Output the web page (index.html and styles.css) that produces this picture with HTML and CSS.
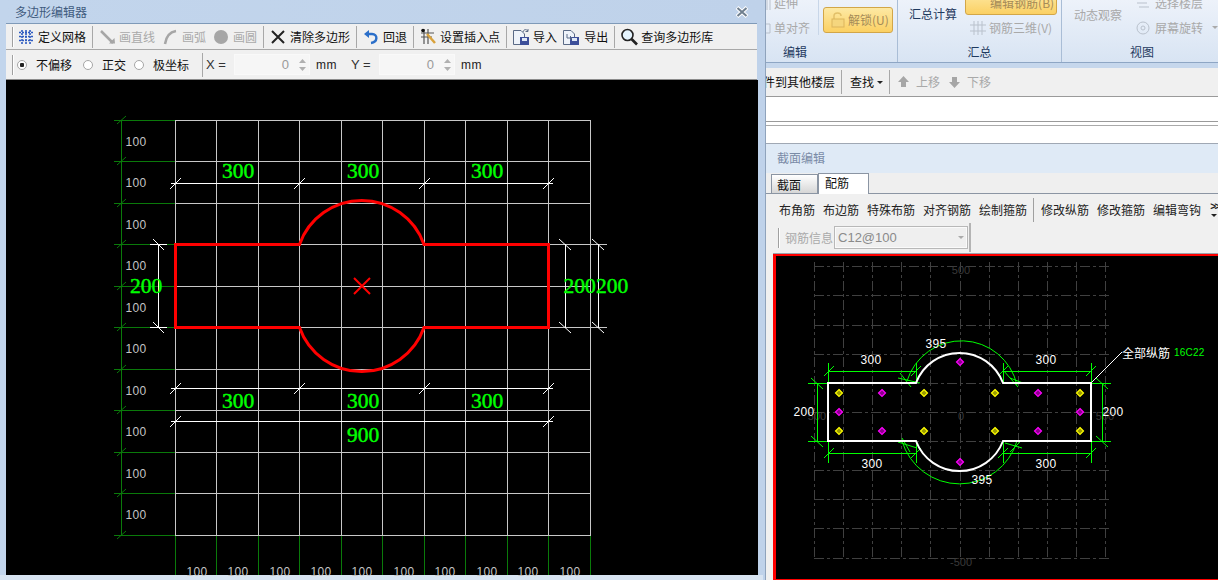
FILE: index.html
```html
<!DOCTYPE html>
<html lang="zh">
<head>
<meta charset="utf-8">
<title>多边形编辑器</title>
<link rel="stylesheet" href="styles.css">
</head>
<body>
<div class="app">
  <section class="editor">
    <header class="titlebar">
      <span class="title">多边形编辑器</span>
      <svg class="close" width="14" height="12" viewBox="0 0 14 12"><path class="close-o" d="M2 1.500 L12 10.500 M12 1.500 L2 10.500"/><path class="close-i" d="M2.500 2 L11.500 10 M11.500 2 L2.500 10"/></svg>
    </header>
    <div class="tb tb-one">
      <i class="handle"></i>
      <div class="tool first">
        <svg class="ic" width="14" height="16" viewBox="0 0 14 16"><path class="i-grid" d="M3 1V15M7 1V15M11 1V15M0 3.500H14M0 7.500H14M0 11.500H14"/></svg>
        <span>定义网格</span>
      </div>
      <i class="sep"></i>
      <div class="tool off">
        <svg class="ic" width="14" height="16" viewBox="0 0 14 16"><path class="i-off" d="M1 2 L13 14"/><path class="i-offf" d="M9 14.500 L15 14.500 L14.500 9z"/></svg>
        <span>画直线</span>
      </div>
      <div class="tool off">
        <svg class="ic" width="14" height="16" viewBox="0 0 14 16"><path class="i-off" d="M2 15 C3 8 7 3 13 2"/></svg>
        <span>画弧</span>
      </div>
      <div class="tool off">
        <svg class="ic" width="14" height="16" viewBox="0 0 14 16"><circle class="i-offf" cx="7" cy="8" r="7"/></svg>
        <span>画圆</span>
      </div>
      <i class="sep"></i>
      <div class="tool">
        <svg class="ic" width="14" height="16" viewBox="0 0 14 16"><path class="i-x" d="M1 2 L13 14 M13 2 L1 14"/></svg>
        <span>清除多边形</span>
      </div>
      <i class="sep"></i>
      <div class="tool">
        <svg class="ic" width="14" height="16" viewBox="0 0 14 16"><path class="i-undo" d="M3 5 H8 C14 5 14 13 7 14"/><path class="i-undof" d="M5 1 V9 L0 5z"/></svg>
        <span>回退</span>
      </div>
      <i class="sep"></i>
      <div class="tool flush">
        <svg class="ic" width="15" height="18" viewBox="0 0 15 18"><path class="i-dark" d="M1 5H14M1 9H12M4 1V16M8 1V16"/><path class="i-pencil" d="M7 6 L15 15"/><circle class="i-dot" cx="3" cy="2.500" r="1.800"/></svg>
        <span>设置插入点</span>
      </div>
      <i class="sep"></i>
      <div class="tool flush">
        <svg class="ic" width="15" height="18" viewBox="0 0 15 18"><path class="i-page" d="M0.500 2.500H8L11.500 6V16.500H0.500z"/><path class="i-disk" d="M7 9H16V17H7z"/><path class="i-diskl" d="M9 10H14V13H9z"/><path class="i-arrow" d="M10 4 C11 1 13 1 15 3 M15 1V3.500H12.500"/></svg>
        <span>导入</span>
      </div>
      <div class="tool near">
        <svg class="ic" width="16" height="18" viewBox="0 0 16 18"><path class="i-page" d="M0.500 2.500H8L11.500 6V16.500H0.500z"/><path class="i-disk" d="M7 9H16V17H7z"/><path class="i-diskl" d="M9 10H14V13H9z"/><path class="i-arrow" d="M4 6 L4 10 H9 M7 8 L9 10 L7 12"/></svg>
        <span>导出</span>
      </div>
      <i class="sep"></i>
      <div class="tool flush">
        <svg class="ic" width="15" height="18" viewBox="0 0 15 18"><circle class="i-lens" cx="6.500" cy="7" r="5.500"/><path class="i-handle" d="M10.500 11 L16 16.500"/></svg>
        <span>查询多边形库</span>
      </div>
    </div>
    <div class="tb tb-two">
      <i class="handle"></i>
      <label class="radio r-a"><i class="dot on"></i><span>不偏移</span></label>
      <label class="radio r-b"><i class="dot"></i><span>正交</span></label>
      <label class="radio r-c"><i class="dot"></i><span>极坐标</span></label>
      <i class="sep sep-coord"></i>
      <span class="coord">X =</span>
      <div class="num"><span>0</span><svg class="spin" width="7" height="16" viewBox="0 0 7 16"><path d="M3.500 2 L7 6 H0z M3.500 14 L7 10 H0z"/></svg></div>
      <span class="unit">mm</span>
      <span class="coord coord-y">Y =</span>
      <div class="num"><span>0</span><svg class="spin" width="7" height="16" viewBox="0 0 7 16"><path d="M3.500 2 L7 6 H0z M3.500 14 L7 10 H0z"/></svg></div>
      <span class="unit">mm</span>
    </div>
    <svg class="canvas-l" width="752" height="495" viewBox="6 80 752 495">
      <path class="g-dark crisp" d="M121.500 120V535 M114 120.500H175 M114 161.500H175 M114 203.500H175 M114 244.500H175 M114 286.500H175 M114 327.500H175 M114 369.500H175 M114 410.500H175 M114 452.500H175 M114 493.500H175 M114 535.500H175 M175.500 535V575 M216.500 535V575 M258.500 535V575 M299.500 535V575 M341.500 535V575 M382.500 535V575 M424.500 535V575 M465.500 535V575 M507.500 535V575 M548.500 535V575 M590.500 535V575"/>
      <path class="g-dark" d="M117 124L126 116 M117 165L126 157 M117 207L126 199 M117 248L126 240 M117 290L126 282 M117 331L126 323 M117 373L126 365 M117 414L126 406 M117 456L126 448 M117 497L126 489 M117 539L126 531"/>
      <path class="g-grid" d="M175.500 120V535 M216.500 120V535 M258.500 120V535 M299.500 120V535 M341.500 120V535 M382.500 120V535 M424.500 120V535 M465.500 120V535 M507.500 120V535 M548.500 120V535 M590.500 120V535 M175 120.500H591 M175 161.500H591 M175 203.500H591 M175 244.500H591 M175 286.500H591 M175 327.500H591 M175 369.500H591 M175 410.500H591 M175 452.500H591 M175 493.500H591 M175 535.500H591 M548 244.500H607 M548 327.500H607"/>
      <g class="t-100">
        <text x="136" y="142">100</text><text x="136" y="183">100</text><text x="136" y="225">100</text><text x="136" y="266">100</text><text x="136" y="308">100</text><text x="136" y="349">100</text><text x="136" y="391">100</text><text x="136" y="432">100</text><text x="136" y="474">100</text><text x="136" y="515">100</text>
        <text x="197" y="572">100</text><text x="238" y="572">100</text><text x="280" y="572">100</text><text x="321" y="572">100</text><text x="362" y="572">100</text><text x="404" y="572">100</text><text x="445" y="572">100</text><text x="487" y="572">100</text><text x="528" y="572">100</text><text x="570" y="572">100</text>
      </g>
      <path class="d-white" d="M171 183.500H553 M171 388.500H553 M171 421.500H553 M150 244.500H167 M150 327.500H167 M158.500 244V328 M565.500 244V328 M598.500 244V328"/>
      <path class="d-tick" d="M170 189L181 178 M294 189L305 178 M419 189L430 178 M543 189L554 178 M170 394L181 383 M294 394L305 383 M419 394L430 383 M543 394L554 383 M170 427L181 416 M543 427L554 416 M153 239L164 250 M153 322L164 333 M559 239L571 250 M592 239L604 250 M559 322L571 333 M592 322L604 333"/>
      <path class="poly-red" d="M175.500 244.500H299.500 A66 66 0 0 1 424 244.500 H548.500 V327.500 H424 A66 66 0 0 1 299.500 327.500 H175.500z"/>
      <path class="cross-red" d="M354 278L370 294 M370 278L354 294"/>
      <g class="t-dim">
        <text x="238" y="171">300</text><text x="363" y="171">300</text><text x="487" y="171">300</text>
        <text x="238" y="401">300</text><text x="363" y="401">300</text><text x="487" y="401">300</text>
        <text x="363" y="435">900</text>
        <text x="146" y="286">200</text><text x="579.500" y="286">200</text><text x="612" y="286">200</text>
      </g>
    </svg>
    <div class="editor-foot"></div>
  </section>

  <section class="side">
    <div class="ribbon">
      <div class="rgroup rg-edit">
        <div class="rbody">
          <div class="rcol col-edit">
            <div class="ritem off"><svg width="5" height="14" viewBox="0 0 5 14"><path class="i-rib" d="M1 1V14M4 1V14"/></svg><span>延伸</span></div>
            <div class="ritem off"><svg width="5" height="14" viewBox="0 0 5 14"><path class="i-rib" d="M0 3H4V12H0"/></svg><span>单对齐</span></div>
          </div>
          <i class="rdiv"></i>
          <div class="gold gold-lock">
            <svg width="18" height="18" viewBox="0 0 18 18"><path class="i-lock" d="M5 8V5C5 1 12 1 12 5"/><rect class="i-lockb" x="3" y="8" width="12" height="8"/></svg>
            <span>解锁(U)</span>
          </div>
        </div>
        <div class="rlabel">编辑</div>
      </div>
      <div class="rgroup rg-sum">
        <div class="rbody">
          <div class="rbig sum-calc">汇总计算</div>
          <div class="rcol col-sum">
            <div class="gold gold-edit"><span>编辑钢筋(B)</span></div>
            <div class="ritem off item-3d"><svg width="16" height="16" viewBox="0 0 16 16"><path class="i-rib" d="M4 1V15M8 1V15M12 1V15M0 5H16M0 11H16"/></svg><span>钢筋三维(V)</span></div>
          </div>
        </div>
        <div class="rlabel">汇总</div>
      </div>
      <div class="rgroup rg-view">
        <div class="rbody">
          <div class="rbig off view-orbit">动态观察</div>
          <div class="rcol col-view">
            <div class="ritem off"><svg width="14" height="14" viewBox="0 0 14 14"><path class="i-rib" d="M3 3H13M1 7H11M3 11H13"/></svg><span>选择楼层</span></div>
            <div class="ritem off"><svg width="14" height="14" viewBox="0 0 14 14"><circle class="i-rib" cx="7" cy="7" r="6"/><circle class="i-rib" cx="7" cy="7" r="2"/></svg><span>屏幕旋转</span><i class="caret caret-off"></i></div>
          </div>
        </div>
        <div class="rlabel">视图</div>
      </div>
    </div>
    <div class="band"></div>
    <div class="strip">
      <div class="clip-left"><span>构件到其他楼层</span></div>
      <i class="sep"></i>
      <div class="find"><span>查找</span><i class="caret"></i></div>
      <i class="sep"></i>
      <div class="move off"><svg width="11" height="12" viewBox="0 0 11 12"><path class="i-offf" d="M5.500 0 L11 6 H8 V11 H3 V6 H0z"/></svg><span>上移</span></div>
      <div class="move off"><svg width="11" height="12" viewBox="0 0 11 12"><path class="i-offf" d="M5.500 12 L11 6 H8 V1 H3 V6 H0z"/></svg><span>下移</span></div>
    </div>
    <div class="white-row one"></div>
    <div class="white-row two"></div>
    <div class="sec-head">截面编辑</div>
    <div class="tabs">
      <div class="tab">截面</div>
      <div class="tab active">配筋</div>
    </div>
    <div class="rebar-bar">
      <span>布角筋</span><span>布边筋</span><span>特殊布筋</span><span>对齐钢筋</span><span>绘制箍筋</span>
      <i class="sep sep-rebar"></i>
      <span>修改纵筋</span><span>修改箍筋</span><span>编辑弯钩</span>
      <div class="more"><span>&gt;&gt;</span><i class="caret"></i></div>
    </div>
    <div class="info-row">
      <div class="info-box">
        <i class="handle"></i>
        <span class="info-lab">钢筋信息</span>
        <div class="combo"><span>C12@100</span><i class="caret caret-off"></i></div>
      </div>
    </div>
    <div class="canvas-frame">
      <svg class="canvas-r" width="442" height="323" viewBox="776 256 442 323">
        <path class="grid-dash" d="M814 266H1111 M814 295H1111 M814 325H1111 M814 354H1111 M814 383H1111 M814 412H1111 M814 441H1111 M814 470H1111 M814 499H1111 M814 528H1111 M814 558H1111 M814.500 262V558 M843.500 262V558 M872.500 262V558 M901.500 262V558 M930.500 262V558 M960.500 262V558 M989.500 262V558 M1018.500 262V558 M1047.500 262V558 M1076.500 262V558 M1105.500 262V558"/>
        <g class="t-axis">
          <text x="961" y="270">500</text><text x="961" y="562">-500</text><text x="817" y="416">500</text><text x="961" y="416">0</text><text x="1105" y="416">500</text>
        </g>
        <path class="d-green" d="M828 371.500H916 M1003 371.500H1091 M828 453.500H916 M1003 453.500H1091 M828.500 363V383 M916.500 363V383 M1003.500 363V383 M1091.500 363V383 M828.500 441V463 M916.500 441V463 M1003.500 441V463 M1091.500 441V463 M808 383.500H828 M808 441.500H828 M1091 383.500H1111 M1091 441.500H1111 M817.500 383V441 M1102.500 383V441"/>
        <path class="d-green soft" d="M824 376L834 366 M911 376L921 366 M998 376L1008 366 M1086 376L1096 366 M824 458L834 448 M911 458L921 448 M998 458L1008 448 M1086 458L1096 448 M811 378L823 389 M811 436L823 447 M1096 378L1108 389 M1096 436L1108 447 M900 373L911 387 M898 378L920 383 M1003 370L1018 387 M1010 378L1023 383 M902 438L910 452 M898 442L917 448 M1010 452L1020 442 M1005 443L1022 448"/>
        <path class="arc-green" d="M907 381 A57 57 0 0 1 1017 385 M1017 441 A60 60 0 0 1 902 441"/>
        <path class="poly-white" d="M828 383H916 A46.500 46.500 0 0 1 1003 383 H1091 V441 H1003 A46.500 46.500 0 0 1 916 441 H828z"/>
        <path class="leader" d="M1091 383 L1122 352"/>
        <g class="bars-y">
          <path d="M839 389.500L842.500 393L839 396.500L835.500 393z"/><path d="M924 389.500L927.500 393L924 396.500L920.500 393z"/><path d="M995 389.500L998.500 393L995 396.500L991.500 393z"/><path d="M1080 389.500L1083.500 393L1080 396.500L1076.500 393z"/>
          <path d="M839 427.500L842.500 431L839 434.500L835.500 431z"/><path d="M924 427.500L927.500 431L924 434.500L920.500 431z"/><path d="M995 427.500L998.500 431L995 434.500L991.500 431z"/><path d="M1080 427.500L1083.500 431L1080 434.500L1076.500 431z"/>
        </g>
        <g class="bars-m">
          <path d="M882 389.500L885.500 393L882 396.500L878.500 393z"/><path d="M1038 389.500L1041.500 393L1038 396.500L1034.500 393z"/><path d="M882 427.500L885.500 431L882 434.500L878.500 431z"/><path d="M1038 427.500L1041.500 431L1038 434.500L1034.500 431z"/>
          <path d="M839 408.500L842.500 412L839 415.500L835.500 412z"/><path d="M1080 408.500L1083.500 412L1080 415.500L1076.500 412z"/><path d="M960 358.500L963.500 362L960 365.500L956.500 362z"/><path d="M960 458.500L963.500 462L960 465.500L956.500 462z"/>
        </g>
        <g class="t-white">
          <text x="871" y="360">300</text><text x="1046" y="360">300</text><text x="872" y="464">300</text><text x="1046" y="464">300</text>
          <text x="936" y="344">395</text><text x="982" y="480">395</text><text x="804" y="412">200</text><text x="1113" y="412">200</text>
        </g>
        <text class="t-note" x="1122" y="352">全部纵筋</text>
        <text class="t-bars" x="1174" y="352">16C22</text>
      </svg>
    </div>
  </section>
</div>
</body>
</html>
```

FILE: styles.css
```css
* { box-sizing: border-box; }
html, body { margin: 0; height: 100%; overflow: hidden; }
body { background: #bcd0e8; font: 12px/16px "Noto Sans CJK SC", "Liberation Sans", sans-serif; color: #111; }
i { display: block; font-style: normal; }
svg { display: block; flex: none; overflow: visible; }

.app { display: flex; width: 1218px; height: 580px; }

/* left window */
.editor { width: 766px; height: 580px; flex: none; padding: 0 8px 0 6px; background: linear-gradient(90deg, #c2d5ec, #bfd2ea); border-right: 1px solid #8fa3bc; }
.titlebar { height: 23px; display: flex; align-items: center; justify-content: space-between; margin: 0 -6px; padding: 0 14px 0 15px; }
.title { color: #3f5b7e; }
.close-o { fill: none; stroke: #fff; stroke-width: 4; }
.close-i { fill: none; stroke: #6f7f8f; stroke-width: 2; }

.tb { display: flex; align-items: center; background: #f0f0f0; white-space: nowrap; }
.tb-one { height: 27px; border-top: 1px solid #7f9ab8; border-bottom: 1px solid #a8a8a8; padding-left: 6px; }
.tb-two { height: 30px; border-bottom: 1px solid #8c8c8c; padding-left: 6px; }
.handle { width: 2px; height: 20px; border-left: 1px solid #a0a0a0; border-right: 1px solid #fff; flex: none; }
.sep { width: 1px; height: 22px; background: #a8a8a8; margin: 0 6px; flex: none; }
.tool { display: flex; align-items: center; gap: 5px; margin-left: 8px; }
.tool.first { margin-left: 5px; }
.sep + .tool { margin-left: 1px; }
.sep + .tool.flush { margin-left: 0; }
.tool.near { margin-left: 6px; }
.off { color: #a9a9a9; }

.i-grid { fill: none; stroke: #2e5bc0; stroke-width: 1.600; stroke-dasharray: 2 1; }
.i-off { fill: none; stroke: #a6a6a6; stroke-width: 2.500; }
.i-offf { fill: #a6a6a6; }
.i-x { fill: none; stroke: #222; stroke-width: 2; }
.i-undo { fill: none; stroke: #2b6fc9; stroke-width: 2.400; }
.i-undof { fill: #2b6fc9; }
.i-dark { fill: none; stroke: #555; stroke-width: 1.200; }
.i-pencil { fill: none; stroke: #d9a23c; stroke-width: 2.500; }
.i-dot { fill: #111; }
.i-page { fill: #eef3fa; stroke: #5a6a86; }
.i-disk { fill: #3d4f9a; }
.i-diskl { fill: #dfe8f5; }
.i-arrow { fill: none; stroke: #5a6a86; }
.i-lens { fill: #e4f3fd; stroke: #222; stroke-width: 1.600; }
.i-handle { fill: none; stroke: #222; stroke-width: 2.600; }

.radio { display: flex; align-items: center; gap: 9px; }
.r-a { margin-left: 3px; }
.r-b { margin-left: 11px; }
.r-c { margin-left: 8px; }
.dot { width: 10px; height: 10px; border: 1px solid #a6a6a6; border-radius: 50%; background: #fff; }
.dot.on { background: radial-gradient(circle, #222 0 2px, #fff 2.500px); }
.sep-coord { margin: 0 3px 0 13px; height: 24px; }
.coord { width: 20px; font-family: "Liberation Sans", sans-serif; font-size: 13px; color: #333; }
.num { width: 76px; height: 21px; margin-left: 8px; background: #f6f6f6; border: 1px solid #f9f9f9; display: flex; align-items: center; justify-content: flex-end; gap: 10px; padding-right: 3px; font-family: "Liberation Sans", sans-serif; font-size: 13px; color: #9a9a9a; }
.spin path { fill: #b0b0b0; }
.unit { margin-left: 6px; width: 22px; font-family: "Liberation Sans", sans-serif; font-size: 12px; color: #222; letter-spacing: .4px; }
.coord-y { margin-left: 13px; }

.canvas-l { background: #000; }
.editor-foot { height: 5px; margin: 0 -6px; background: #d8e4f2; }

.g-dark { fill: none; stroke: #0a7a0a; stroke-width: 1; }
.crisp { shape-rendering: crispEdges; }
.g-grid { fill: none; stroke: #c8c8c8; stroke-width: 1; shape-rendering: crispEdges; }
.d-white { fill: none; stroke: #fff; stroke-width: 1; shape-rendering: crispEdges; }
.d-tick { fill: none; stroke: #fff; stroke-width: 1; }
.poly-red { fill: none; stroke: #f00; stroke-width: 3; }
.cross-red { fill: none; stroke: #f00; stroke-width: 2; }
.t-100 text { fill: #c4c4c4; font: 12px "Liberation Sans", sans-serif; letter-spacing: .3px; text-anchor: middle; dominant-baseline: central; }
.t-dim text { fill: #0f0; stroke: #0f0; stroke-width: .45px; font: 21.500px "Liberation Serif", serif; text-anchor: middle; dominant-baseline: central; }

/* right pane */
.side { flex: 1; min-width: 0; height: 580px; display: flex; flex-direction: column; overflow: hidden; background: #f0f0f0; }
.ribbon { height: 63px; flex: none; display: flex; background: linear-gradient(#edf2fa, #d8e4f3); border-bottom: 1px solid #8ea6c4; }
.rgroup { display: flex; flex-direction: column; border-right: 1px solid #a9bdd6; }
.rg-edit { width: 133px; }
.rg-sum { width: 165px; }
.rg-view { flex: 1; border-right: 0; }
.rbody { height: 43px; display: flex; overflow: hidden; }
.rlabel { text-align: center; height: 19px; line-height: 18px; color: #1f3a5f; }
.rg-edit .rlabel { text-align: left; padding-left: 17px; }
.rg-view .rlabel { text-align: left; padding-left: 68px; }
.rcol { display: flex; flex-direction: column; align-self: flex-end; padding-bottom: 3px; white-space: nowrap; }
.ritem { height: 25px; display: flex; align-items: center; gap: 3px; flex: none; }
.col-edit { width: 52px; padding-left: 0; }
.rdiv { width: 1px; height: 35px; background: #c8d6e8; flex: none; }
.gold { background: linear-gradient(#fde9a4, #fbd063); border: 1px solid #d2a648; border-radius: 3px; color: #a58b58; display: flex; align-items: center; white-space: nowrap; flex: none; }
.gold-lock { width: 70px; height: 26px; margin: 7px 0 0 4px; padding-left: 5px; gap: 1px; }
.i-lock { fill: none; stroke: #e2c069; stroke-width: 1.500; }
.i-lockb { fill: #f5d67e; stroke: #dcb55c; }
.i-rib { fill: none; stroke: #b9c1cc; }
.rbig { align-self: flex-start; margin-top: 6px; white-space: nowrap; color: #1f3a5f; }
.rbig.off { color: #a9a9a9; }
.sum-calc { margin-left: 11px; }
.col-sum { margin-left: 8px; }
.gold-edit { width: 92px; height: 24px; padding-left: 24px; }
.item-3d { padding-left: 5px; }
.view-orbit { margin-left: 12px; margin-top: 7px; }
.col-view { margin-left: 14px; }
.col-view .ritem { gap: 5px; }
.caret { width: 0; height: 0; border: 3px solid transparent; border-top: 3px solid #222; border-bottom: 0; flex: none; }
.caret-off { border-top-color: #aaa; }
.col-view .caret { margin-left: 4px; }

.band { height: 5px; flex: none; background: #c6d7ec; }
.strip { height: 29px; flex: none; display: flex; align-items: center; border-bottom: 1px solid #9a9a9a; background: #f0f0f0; white-space: nowrap; }
.clip-left { width: 69px; display: flex; justify-content: flex-end; overflow: hidden; flex: none; }
.clip-left span { flex: none; }
.strip .sep { margin: 0 0 0 6px; height: 24px; }
.find { display: flex; align-items: center; gap: 3px; margin-left: 8px; width: 39px; }
.find + .sep { margin-left: 0; }
.move { display: flex; align-items: center; gap: 7px; margin-left: 8px; }
.move + .move { margin-left: 9px; }

.white-row { flex: none; background: #fff; border-bottom: 1px solid #9a9a9a; }
.white-row.one { height: 25px; }
.white-row.two { height: 4px; border-bottom-color: #aaa; }
.sec-head { height: 47px; flex: none; background: linear-gradient(#fff 0 17px, #a0a8b4 17px 18px, #dfeaf6 18px); padding: 24px 0 0 11px; color: #7a8ba6; line-height: 16px; }

.tabs { height: 21px; flex: none; display: flex; align-items: flex-end; padding-left: 5px; border-bottom: 1px solid #8b95a3; background: #efefef; }
.tab { width: 47px; height: 19px; padding-left: 5px; background: linear-gradient(#fff, #d6d6d6); border: 1px solid #8b95a3; border-bottom: 0; font-size: 12px; line-height: 19px; }
.tab.active { width: 51px; height: 21px; background: #fff; padding-left: 6px; line-height: 17px; margin-bottom: -1px; position: relative; }

.rebar-bar { height: 29px; margin-left: 7px; padding: 2px 0 0 6px; flex: none; display: flex; align-items: center; gap: 8px; white-space: nowrap; color: #222; }
.sep-rebar { margin: 0 -1px 0 -2px; height: 24px; background: #a0a0a0; }
.more { margin-left: 1px; display: flex; flex-direction: column; align-items: center; gap: 2px; font: bold 10px/10px "Liberation Sans", sans-serif; letter-spacing: -1.500px; }
.info-row { height: 30px; flex: none; }
.info-box { width: 198px; height: 29px; margin-left: 7px; display: flex; align-items: center; border-right: 2px solid #b4b4b4; padding-left: 5px; }
.info-lab { color: #aaa; margin-left: 5px; }
.combo { width: 134px; height: 23px; margin-left: 1px; background: #efefef; border: 1px solid #b8b8b8; box-shadow: inset 0 0 0 1px #fafafa; display: flex; align-items: center; justify-content: space-between; padding: 0 3px; color: #8a8a8a; font-family: "Liberation Sans", sans-serif; font-size: 13px; }

.canvas-frame { flex: none; height: 327px; margin-left: 7px; border-top: 1px solid #9aa3ad; background: #f00; padding: 2px 0 2px 3px; overflow: hidden; }
.canvas-r { background: #000; }
.grid-dash { fill: none; stroke: #404040; stroke-width: 1; stroke-dasharray: 10 3 3 3; shape-rendering: crispEdges; }
.t-axis text { fill: #3a3a3a; font: 11px "Liberation Sans", sans-serif; text-anchor: middle; dominant-baseline: central; }
.d-green { fill: none; stroke: #0f0; stroke-width: 1; shape-rendering: crispEdges; }
.d-green.soft { shape-rendering: auto; }
.arc-green { fill: none; stroke: #0f0; stroke-width: 1; }
.poly-white { fill: none; stroke: #fff; stroke-width: 2; }
.leader { fill: none; stroke: #fff; stroke-width: 1; }
.bars-y path { fill: #9a9a00; stroke: #ff0; stroke-width: 1.200; }
.bars-m path { fill: #8a008a; stroke: #f0f; stroke-width: 1.200; }
.t-white text { fill: #fff; font: 12px "Liberation Sans", sans-serif; letter-spacing: .3px; text-anchor: middle; dominant-baseline: central; }
.t-note { fill: #fff; font: 12px "Noto Sans CJK SC", sans-serif; dominant-baseline: central; }
.t-bars { fill: #0f0; font: 10px "Liberation Sans", sans-serif; letter-spacing: .2px; dominant-baseline: central; }
```
